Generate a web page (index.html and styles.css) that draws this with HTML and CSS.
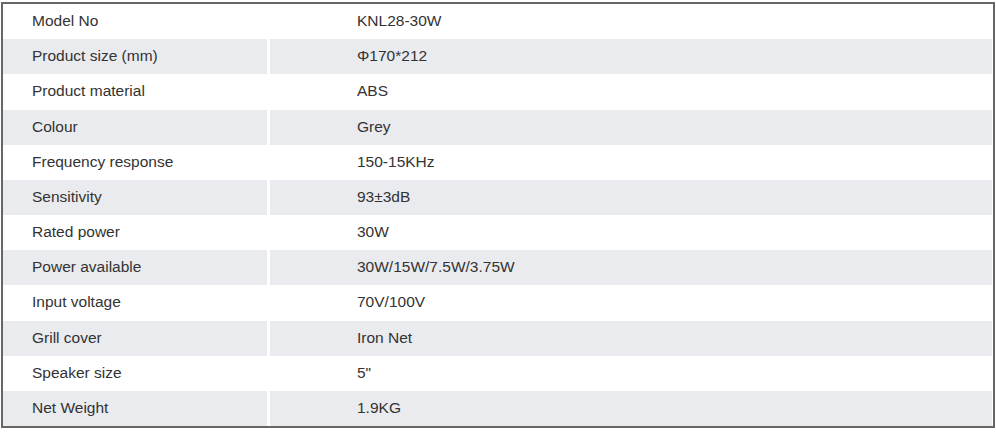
FILE: index.html
```html
<!DOCTYPE html>
<html>
<head>
<meta charset="utf-8">
<link rel="stylesheet" href="styles.css">
</head>
<body>
<div class="frame">
  <div class="spec">
    <div class="row"><div class="k">Model No</div><div class="v">KNL28-30W</div></div>
    <div class="row alt"><div class="k">Product size (mm)</div><div class="v">Φ170*212</div></div>
    <div class="row"><div class="k">Product material</div><div class="v">ABS</div></div>
    <div class="row alt"><div class="k">Colour</div><div class="v">Grey</div></div>
    <div class="row"><div class="k">Frequency response</div><div class="v">150-15KHz</div></div>
    <div class="row alt"><div class="k">Sensitivity</div><div class="v">93±3dB</div></div>
    <div class="row"><div class="k">Rated power</div><div class="v">30W</div></div>
    <div class="row alt"><div class="k">Power available</div><div class="v">30W/15W/7.5W/3.75W</div></div>
    <div class="row"><div class="k">Input voltage</div><div class="v">70V/100V</div></div>
    <div class="row alt"><div class="k">Grill cover</div><div class="v">Iron Net</div></div>
    <div class="row"><div class="k">Speaker size</div><div class="v">5"</div></div>
    <div class="row alt"><div class="k">Net Weight</div><div class="v">1.9KG</div></div>
  </div>
</div>
</body>
</html>
```

FILE: styles.css
```css
html, body {
  margin: 0;
  padding: 0;
  background: #ffffff;
}
body {
  font-family: "Liberation Sans", Arial, sans-serif;
  font-size: 15.5px;
  color: #333333;
}
.frame {
  margin: 2px 0 0 1px;
  width: 989px;
  height: 422px;
  border: 2px solid #666666;
  padding-right: 1px;
  background: #ffffff;
}
.spec {
  display: grid;
  grid-template-rows: repeat(12, 1fr);
  height: 100%;
}
.row {
  display: grid;
  grid-template-columns: 264px 1fr;
  column-gap: 3px;
}
.row > div {
  display: flex;
  align-items: center;
  white-space: nowrap;
  padding-bottom: 1px;
}
.k {
  padding-left: 29px;
}
.v {
  padding-left: 87px;
}
.alt > div {
  background: #eaebef;
}
```
